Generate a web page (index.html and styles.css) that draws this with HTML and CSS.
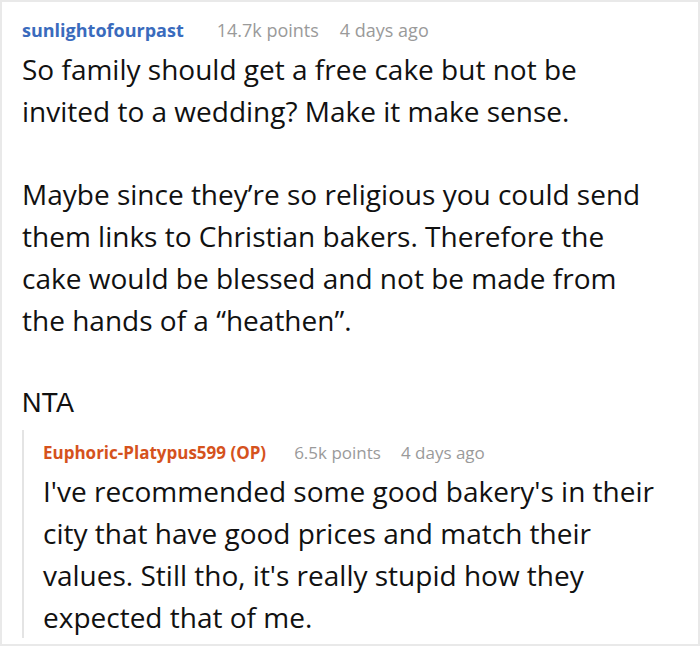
FILE: index.html
```html
<!DOCTYPE html>
<html>
<head>
<meta charset="utf-8">
<link rel="stylesheet" href="styles.css">
</head>
<body>
<div class="frame">
  <div class="comment">
    <div class="meta">
      <span class="author">sunlightofourpast</span>
      <span class="points">14.7k points</span>
      <span class="time">4 days ago</span>
    </div>
    <div class="body top-body">
      <p>So family should get a free cake but not be invited to a wedding? Make it make sense.</p>
      <p>Maybe since they’re so religious you could send them links to Christian bakers. Therefore the cake would be blessed and not be made from the hands of a “heathen”.</p>
      <p class="nta">NTA</p>
    </div>
    <div class="reply">
      <div class="meta">
        <span class="author op">Euphoric-Platypus599 (OP)</span>
        <span class="points">6.5k points</span>
        <span class="time">4 days ago</span>
      </div>
      <div class="body">
        <p>I've recommended some good bakery's in their city that have good prices and match their values. Still tho, it's really stupid how they expected that of me.</p>
      </div>
    </div>
  </div>
</div>
</body>
</html>
```
FILE: styles.css
```css
html, body {
  margin: 0;
  padding: 0;
  background: #ffffff;
}
.frame {
  box-sizing: border-box;
  width: 700px;
  height: 646px;
  border: 2px solid #e9e9e9;
  overflow: hidden;
  font-family: "Open Sans", "Noto Sans", sans-serif;
  color: #111111;
}
.comment {
  padding: 16px 10px 0 20px;
}
.meta {
  font-size: 18px;
  line-height: 24px;
  display: flex;
  align-items: baseline;
}
.author {
  font-weight: 700;
  color: #3a6bbd;
  margin-right: 33px;
}
.points, .time {
  color: #9a9a9a;
}
.points {
  margin-right: 21px;
}
.reply .meta {
  font-size: 17px;
}
.author.op {
  color: #d5521d;
  margin-right: 28px;
}
.reply .points {
  margin-right: 20px;
}
.body {
  margin-top: 6px;
  font-size: 28px;
  line-height: 42px;
}
.top-body {
  margin-right: 23px;
}
.body p {
  margin: 0 0 41px 0;
}
.body p:last-child {
  margin-bottom: 0;
}
.nta {
  font-family: "Liberation Sans", Arial, sans-serif;
  font-size: 27px;
}
.reply {
  margin-top: 6px;
  border-left: 2px solid #e4e4e4;
  padding: 11px 0 0 19px;
}
.reply .body {
  margin-top: 5px;
}
```
